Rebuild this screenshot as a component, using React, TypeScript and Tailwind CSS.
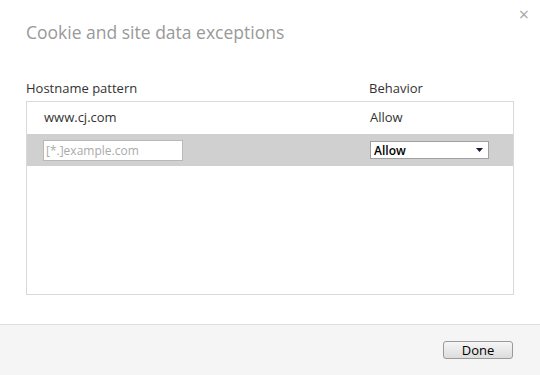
import { useState } from 'react'

const font = { fontFamily: '"Open Sans", "Noto Sans", sans-serif' }

export default function App() {
  const [behavior, setBehavior] = useState('Allow')

  return (
    <div className="w-[540px] h-[375px] bg-white flex flex-col text-[13px] text-[#333]" style={font}>
      {/* Header */}
      <div className="relative h-[64px] pl-[26px] pt-[19px]">
        <h1 className="text-[17.5px] leading-[26px] text-[#999] font-normal">Cookie and site data exceptions</h1>
        <button className="absolute top-[5px] right-[11px] text-[#a8a8a8] text-[18px] leading-none">×</button>
      </div>

      {/* Body */}
      <div className="flex-1 px-[26px] pt-[13px]">
        <div className="flex h-[24px] items-center text-[#333]">
          <div className="w-[343px]">Hostname pattern</div>
          <div>Behavior</div>
        </div>
        <div className="h-[194px] border border-[#d9d9d9] flex flex-col">
          <div className="h-[32px] flex items-center">
            <div className="w-[343px] pl-[17px]">www.cj.com</div>
            <div>Allow</div>
          </div>
          <div className="h-[32px] flex items-center bg-[#d0d0d0]">
            <div className="w-[343px] pl-[16px]">
              <input
                placeholder="[*.]example.com"
                className="w-[140px] h-[21px] bg-white border border-[#b8b8b8] px-[2px] text-[12px] placeholder:text-[#aaa] outline-none"
                style={font}
              />
            </div>
            <div className="relative w-[119px] h-[18px]">
              <select
                value={behavior}
                onChange={e => setBehavior(e.target.value)}
                className="appearance-none w-full h-full bg-white border border-[#a0a0a0] pl-[3px] text-[12px] text-black font-semibold outline-none"
                style={font}
              >
                <option>Allow</option>
                <option>Block</option>
                <option>Clear on exit</option>
              </select>
              <svg className="absolute right-[6px] top-[7px] pointer-events-none" width="7" height="4" viewBox="0 0 7 4">
                <path d="M0 0h7L3.5 4z" fill="#1a1a3a" />
              </svg>
            </div>
          </div>
        </div>
      </div>

      {/* Footer */}
      <div className="h-[51px] bg-[#f5f5f5] border-t border-[#dedede] flex items-center justify-end pr-[27px]">
        <button
          className="w-[70px] h-[18px] rounded-[3px] border border-[#9a9a9a] bg-gradient-to-b from-[#f6f6f6] to-[#dcdcdc] text-[13px] leading-none text-black"
          style={font}
        >
          Done
        </button>
      </div>
    </div>
  )
}
